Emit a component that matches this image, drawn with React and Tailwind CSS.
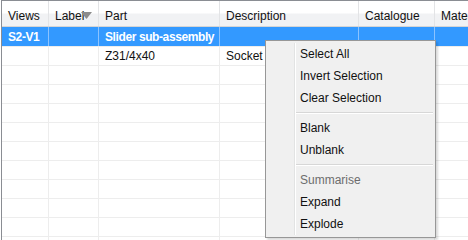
import React from 'react';

const cols = [
  { key: 'views', title: 'Views', w: 'w-[47px]' },
  { key: 'label', title: 'Label', w: 'w-[50px]' },
  { key: 'part', title: 'Part', w: 'w-[121px]' },
  { key: 'desc', title: 'Description', w: 'w-[139px]' },
  { key: 'cat', title: 'Catalogue', w: 'w-[76px]' },
  { key: 'mat', title: 'Material', w: 'w-[80px]' },
];

const rows = [
  { views: 'S2-V1', label: '', part: 'Slider sub-assembly', desc: '', cat: '', mat: '', selected: true },
  { views: '', label: '', part: 'Z31/4x40', desc: 'Socket Head Cap Screw', cat: '', mat: '' },
  ...Array.from({ length: 10 }, () => ({ views: '', label: '', part: '', desc: '', cat: '', mat: '' })),
];

const menu = [
  { label: 'Select All' },
  { label: 'Invert Selection' },
  { label: 'Clear Selection' },
  { sep: true },
  { label: 'Blank' },
  { label: 'Unblank' },
  { sep: true },
  { label: 'Summarise', disabled: true },
  { label: 'Expand' },
  { label: 'Explode' },
];

export default function App() {
  return (
    <div className="relative w-[468px] h-[240px] overflow-hidden bg-white text-[12px] text-[#111] font-['Liberation_Sans',Arial,sans-serif]">
      <div className="ml-px h-full border-l border-t border-[#8a8d93]">
        {/* header */}
        <div className="flex h-[26px] border-b border-[#d5d5d5] bg-[linear-gradient(#ffffff_0%,#ffffff_48%,#f1f2f4_52%,#f1f2f4_100%)]">
          {cols.map((c) => (
            <div key={c.key} className={`${c.w} shrink-0 relative flex items-center pl-[6px] pt-[4px] border-r border-[#e3e4e6] whitespace-nowrap overflow-hidden`}>
              {c.title}
              {c.key === 'label' && (
                <svg className="absolute left-[32px] top-[11px]" width="11" height="8" viewBox="0 0 11 8">
                  <path d="M0 0 H11 L5.5 7 Z" fill="#8c8c8c" />
                </svg>
              )}
            </div>
          ))}
        </div>
        {/* rows */}
        {rows.map((r, i) => (
          <div
            key={i}
            className={`flex ${i === 0 ? 'h-[20px]' : 'h-[19px]'} border-b border-[#ededed] ${r.selected ? 'bg-[#3399ff] text-white font-bold tracking-[-0.4px]' : ''}`}
          >
            {cols.map((c) => (
              <div
                key={c.key}
                className={`${c.w} shrink-0 flex items-center pl-[6px] border-r ${r.selected ? 'border-[#8cc3ff]' : 'border-[#ededed]'} whitespace-nowrap overflow-hidden`}
              >
                {r[c.key]}
              </div>
            ))}
          </div>
        ))}
      </div>

      {/* context menu */}
      <div className="absolute left-[265px] top-[40px] w-[171px] h-[198px] bg-[#f0f0f0] border border-[#979797] shadow-[2px_2px_2px_rgba(0,0,0,0.15)] py-[2px] pl-[2px] pr-[2px]">
        <div className="absolute left-[28px] top-[2px] bottom-[2px] w-[2px] border-l border-[#e2e3e3]">
          <div className="h-full w-px bg-white" />
        </div>
        {menu.map((m, i) =>
          m.sep ? (
            <div key={i} className="h-[8px] flex flex-col justify-center pl-[28px]">
              <div className="h-px bg-[#d7d7d7]" />
              <div className="h-px bg-white" />
            </div>
          ) : (
            <div
              key={i}
              className={`h-[22px] flex items-center pl-[32px] ${m.disabled ? 'text-[#6d6d6d]' : 'text-[#111]'}`}
            >
              {m.label}
            </div>
          )
        )}
      </div>
    </div>
  );
}
